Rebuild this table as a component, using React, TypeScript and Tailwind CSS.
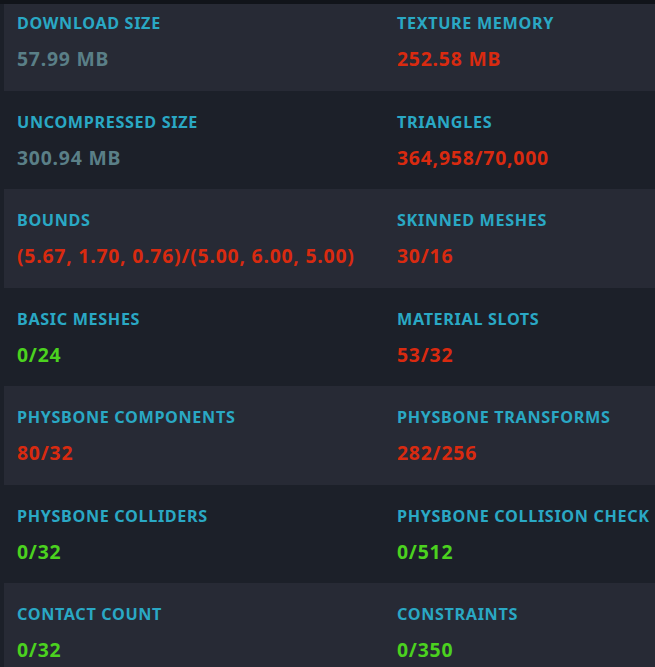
const stats: { label: string; value: string; tone: 'grey' | 'red' | 'green' }[][] = [
  [
    { label: 'Download Size', value: '57.99 MB', tone: 'grey' },
    { label: 'Texture Memory', value: '252.58 MB', tone: 'red' },
  ],
  [
    { label: 'Uncompressed Size', value: '300.94 MB', tone: 'grey' },
    { label: 'Triangles', value: '364,958/70,000', tone: 'red' },
  ],
  [
    { label: 'Bounds', value: '(5.67, 1.70, 0.76)/(5.00, 6.00, 5.00)', tone: 'red' },
    { label: 'Skinned Meshes', value: '30/16', tone: 'red' },
  ],
  [
    { label: 'Basic Meshes', value: '0/24', tone: 'green' },
    { label: 'Material Slots', value: '53/32', tone: 'red' },
  ],
  [
    { label: 'PhysBone Components', value: '80/32', tone: 'red' },
    { label: 'PhysBone Transforms', value: '282/256', tone: 'red' },
  ],
  [
    { label: 'PhysBone Colliders', value: '0/32', tone: 'green' },
    { label: 'PhysBone Collision Check', value: '0/512', tone: 'green' },
  ],
  [
    { label: 'Contact Count', value: '0/32', tone: 'green' },
    { label: 'Constraints', value: '0/350', tone: 'green' },
  ],
];

const toneClass = {
  grey: 'text-[#5a7f87]',
  red: 'text-[#d92a10]',
  green: 'text-[#4bd21f]',
};

function Stat({ label, value, tone }: { label: string; value: string; tone: 'grey' | 'red' | 'green' }) {
  return (
    <div className="flex flex-col gap-[13px] min-w-0 whitespace-nowrap">
      <span className="text-[16.2px] leading-[20px] font-bold uppercase tracking-[0.04em] text-[#2aa8c4]">{label}</span>
      <span className={`text-[19.4px] leading-[26px] font-bold tracking-[0.04em] ${toneClass[tone]}`}>{value}</span>
    </div>
  );
}

export default function App() {
  return (
    <div className="w-[655px] h-[667px] overflow-hidden bg-[#1c2029] font-['Noto_Sans',sans-serif]">
      <div className="h-[4px] bg-[#11141a]" />
      <div className="pl-[4px]">
        {stats.map((row, i) => (
          <div
            key={i}
            className={`grid grid-cols-[380px_1fr] pl-[13px] ${i % 2 === 0 ? 'bg-[#272a35]' : 'bg-[#1c2029]'} ${
              i === 0 ? 'h-[87px] pt-[9px]' : 'h-[98.4px] pt-[21px]'
            }`}
          >
            {row.map((s) => (
              <Stat key={s.label} {...s} />
            ))}
          </div>
        ))}
      </div>
    </div>
  );
}
